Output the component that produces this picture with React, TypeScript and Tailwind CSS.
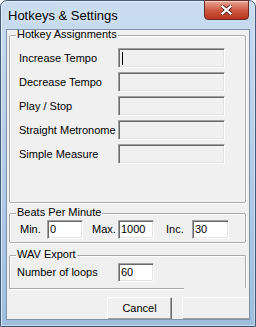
import React from "react";

const font = { fontFamily: '"Liberation Sans", Arial, sans-serif' };

function Box({ className, children }: { className: string; children?: React.ReactNode }) {
  return (
    <div
      className={`flex items-center shrink-0 border border-t-[#a0a0a0] border-l-[#a0a0a0] border-b-white border-r-white shadow-[inset_1px_1px_0_#696969,inset_-1px_-1px_0_#e3e3e3] pl-[2px] text-[11px] leading-[13px] ${className}`}
    >
      {children}
    </div>
  );
}

function Legend({ children }: { children: React.ReactNode }) {
  return (
    <span className="absolute left-[6px] -top-[8px] bg-[#f0f0f0] px-[1px] text-[11px] leading-[13px] text-black whitespace-nowrap">
      {children}
    </span>
  );
}

const hotkeys = ["Increase Tempo", "Decrease Tempo", "Play / Stop", "Straight Metronome", "Simple Measure"];

export default function App() {
  return (
    <div className="w-[256px] h-[327px] overflow-hidden bg-white" style={font}>
      <div className="w-full h-full flex flex-col rounded-t-[7px] border border-[#3f5b78] bg-gradient-to-b from-[#c9dcf1] via-[#b3cce8] to-[#9fbedd] shadow-[inset_1px_1px_0_rgba(255,255,255,0.6),inset_-1px_-1px_0_rgba(255,255,255,0.4)]">
        {/* title bar */}
        <div className="h-[28px] flex items-start shrink-0">
          <div className="self-center pl-[7px] text-[13px] leading-[15px] text-black [text-shadow:0_0_6px_rgba(255,255,255,0.9)]">
            Hotkeys &amp; Settings
          </div>
          <div className="ml-auto mr-[6px] w-[45px] h-[20px] -mt-px rounded-b-[4px] border border-[#6b2b22] bg-gradient-to-b from-[#e9a797] via-[#cf5a43] to-[#b8321c] shadow-[inset_0_1px_0_rgba(255,255,255,0.5)] flex items-center justify-center">
            <svg width="11" height="10" viewBox="0 0 11 10">
              <path d="M1.5 1.5 L9.5 8.5 M9.5 1.5 L1.5 8.5" stroke="#5a1c14" strokeWidth="4" strokeLinecap="square" />
              <path d="M1.5 1.5 L9.5 8.5 M9.5 1.5 L1.5 8.5" stroke="#ffffff" strokeWidth="2.2" strokeLinecap="square" />
            </svg>
          </div>
        </div>

        {/* client */}
        <div className="mx-[5px] mb-[6px] h-[291px] border border-[#7f93a8] bg-[#f0f0f0] overflow-hidden flex flex-col text-black">
          {/* Hotkey Assignments */}
          <div className="relative mt-[5px] ml-[2px] w-[237px] h-[168px] shrink-0 border border-[#a9a9a9] rounded-[2px] shadow-[inset_1px_1px_0_#fff,1px_1px_0_#fff] pt-[12px] pl-[9px] flex flex-col gap-[4px]">
            <Legend>Hotkey Assignments</Legend>
            {hotkeys.map((h, i) => (
              <div key={h} className="flex items-center h-[20px]">
                <span className="w-[99px] shrink-0 text-[11px] leading-[13px] whitespace-nowrap">{h}</span>
                <Box className="w-[107px] h-[20px] bg-[#f0f0f0]">
                  {i === 0 ? <span className="ml-[1px] w-px h-[13px] bg-black" /> : null}
                </Box>
              </div>
            ))}
          </div>

          {/* Beats Per Minute */}
          <div className="relative mt-[10px] ml-[2px] w-[237px] h-[30px] shrink-0 border border-[#a9a9a9] rounded-[2px] shadow-[inset_1px_1px_0_#fff,1px_1px_0_#fff] pt-[6px] pl-[10px] flex items-start">
            <Legend>Beats Per Minute</Legend>
            <span className="w-[27px] shrink-0 h-[19px] flex items-center text-[11px] leading-[13px]">Min.</span>
            <Box className="w-[36px] h-[19px] bg-white">0</Box>
            <span className="ml-[9px] shrink-0 w-[26px] h-[19px] flex items-center text-[11px] leading-[13px]">Max.</span>
            <Box className="w-[36px] h-[19px] bg-white">1000</Box>
            <span className="ml-[12px] shrink-0 w-[26px] h-[19px] flex items-center text-[11px] leading-[13px]">Inc.</span>
            <Box className="w-[37px] h-[19px] bg-white">30</Box>
          </div>

          {/* WAV Export */}
          <div className="relative mt-[12px] ml-[2px] w-[237px] h-[33px] shrink-0 border border-b-0 border-[#a9a9a9] rounded-t-[2px] shadow-[inset_1px_1px_0_#fff,1px_0_0_#fff] pt-[7px] pl-[7px] flex items-start">
            <Legend>WAV Export</Legend>
            <span className="w-[101px] shrink-0 h-[19px] flex items-center text-[11px] leading-[13px]">Number of loops</span>
            <Box className="w-[36px] h-[19px] bg-white">60</Box>
          </div>
          <div className="ml-[2px] w-[175px] h-px bg-[#a9a9a9] shadow-[0_1px_0_#fff] shrink-0" />

          {/* buttons */}
          <div className="mt-[8px] flex shrink-0">
            <div className="ml-[100px] shrink-0 w-[65px] h-[23px] border border-t-white border-l-white border-b-[#696969] border-r-[#696969] shadow-[inset_-1px_-1px_0_#a0a0a0] flex items-center justify-center text-[11px] leading-[13px]">
              Cancel
            </div>
            <div className="ml-[10px] w-[75px] h-[23px] shrink-0 border border-t-white border-l-white border-b-[#696969] border-r-[#696969] shadow-[inset_-1px_-1px_0_#a0a0a0]" />
          </div>
        </div>
      </div>
    </div>
  );
}
